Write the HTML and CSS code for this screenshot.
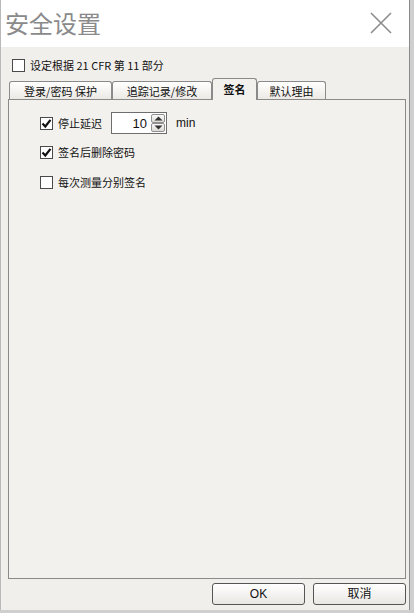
FILE: index.html
```html
<!DOCTYPE html>
<html lang="zh">
<head>
<meta charset="utf-8">
<title>安全设置</title>
<link rel="stylesheet" href="styles.css">
</head>
<body>
<div class="screen">
  <div class="dialog">
    <div class="titlebar">
      <span class="title">安全设置</span>
      <span class="close">
        <svg width="22" height="22" viewBox="0 0 22 22"><path d="M1 1 L21 21 M21 1 L1 21" stroke="#8c8c8c" stroke-width="1.6" fill="none"/></svg>
      </span>
    </div>
    <div class="body">
      <label class="check-row cfr">
        <span class="box"></span>
        <span class="txt">设定根据 21 CFR 第 11 部分</span>
      </label>
      <div class="tabs">
        <div class="tab t1">登录/密码 保护</div>
        <div class="tab t2">追踪记录/修改</div>
        <div class="tab active t3">签名</div>
        <div class="tab t4">默认理由</div>
      </div>
      <div class="panel">
        <div class="row r1">
          <label class="check-row">
            <span class="box checked"><svg width="11" height="11" viewBox="0 0 11 11"><path d="M1.5 5.5 L4.3 8.5 L9.5 1.8" stroke="#111" stroke-width="2.2" fill="none"/></svg></span>
            <span class="txt">停止延迟</span>
          </label>
          <div class="spin">
            <span class="spin-val">10</span>
            <span class="spin-btns">
              <span class="sb"><svg width="9" height="5" viewBox="0 0 9 5"><path d="M0.5 4.5 L4.5 0.5 L8.5 4.5 Z" fill="#333"/></svg></span>
              <span class="sb"><svg width="9" height="5" viewBox="0 0 9 5"><path d="M0.5 0.5 L4.5 4.5 L8.5 0.5 Z" fill="#333"/></svg></span>
            </span>
          </div>
          <span class="unit">min</span>
        </div>
        <label class="check-row r2">
          <span class="box checked"><svg width="11" height="11" viewBox="0 0 11 11"><path d="M1.5 5.5 L4.3 8.5 L9.5 1.8" stroke="#111" stroke-width="2.2" fill="none"/></svg></span>
          <span class="txt">签名后删除密码</span>
        </label>
        <label class="check-row r3">
          <span class="box"></span>
          <span class="txt">每次测量分别签名</span>
        </label>
      </div>
      <div class="buttons">
        <button class="btn">OK</button>
        <button class="btn">取消</button>
      </div>
    </div>
  </div>
</div>
</body>
</html>
```

FILE: styles.css
```css
html, body {
  margin: 0;
  padding: 0;
}
body {
  width: 414px;
  height: 613px;
  overflow: hidden;
  background: #cfcfcf;
  font-family: "Noto Sans CJK SC", "Liberation Sans", sans-serif;
  font-size: 11px;
  color: #111;
}
.screen {
  display: flex;
  width: 414px;
  height: 613px;
}
.dialog {
  width: 408px;
  height: 610px;
  border-left: 1px solid #b9b9b9;
  border-right: 1px solid #8a8a8a;
  display: flex;
  flex-direction: column;
  background: #f1efec;
}
.titlebar {
  height: 47px;
  flex: none;
  background: #fff;
  display: flex;
  align-items: center;
  justify-content: space-between;
  padding: 0 17px 0 4px;
}
.title {
  font-size: 24px;
  color: #8a8a8a;
  line-height: 1;
  margin-top: -1px;
}
.close {
  display: flex;
  margin-top: -1px;
}
.body {
  flex: 1;
  display: flex;
  flex-direction: column;
  padding: 10px 0 0 7px;
}
.check-row {
  display: flex;
  align-items: center;
  height: 16px;
  line-height: 16px;
}
.box {
  width: 11px;
  height: 11px;
  border: 1px solid #4a4a4a;
  background: #fff;
  display: flex;
  align-items: center;
  justify-content: center;
  flex: none;
}
.txt {
  margin-left: 5px;
  white-space: nowrap;
}
.cfr {
  padding-left: 4px;
}
.tabs {
  display: flex;
  align-items: flex-end;
  height: 22px;
  margin-top: 5px;
  padding-left: 1px;
  margin-bottom: -1px;
}
.tab {
  height: 19px;
  box-sizing: border-box;
  border: 1px solid #8a8a8a;
  border-bottom: none;
  border-radius: 3px 3px 0 0;
  background: linear-gradient(#ffffff, #ebe8e3);
  display: flex;
  align-items: center;
  justify-content: center;
  white-space: nowrap;
  line-height: 1;
}
.t1 { width: 103px; }
.t2 { width: 100px; }
.t3 { width: 45px; }
.t4 { width: 69px; }
.tab.active {
  height: 22px;
  background: #f3f1ee;
  font-weight: bold;
  position: relative;
  z-index: 1;
}
.panel {
  width: 398px;
  height: 480px;
  box-sizing: border-box;
  border: 1px solid #8a8a8a;
  background: #f3f1ee;
  padding: 12px 0 0 31px;
  display: flex;
  flex-direction: column;
  align-items: flex-start;
}
.row {
  display: flex;
  align-items: center;
  height: 22px;
}
.spin {
  margin-left: 9px;
  width: 56px;
  height: 22px;
  box-sizing: border-box;
  border: 1px solid #6e6e6e;
  background: #fff;
  display: flex;
  align-items: center;
  justify-content: flex-end;
  padding-right: 1px;
}
.spin-val {
  font-family: "Liberation Sans", "Noto Sans", sans-serif;
  font-size: 13px;
  margin-right: 4px;
}
.spin-btns {
  display: flex;
  flex-direction: column;
  width: 14px;
  height: 18px;
}
.sb {
  flex: 1;
  box-sizing: border-box;
  border: 1px solid #8f8f8f;
  border-radius: 2px;
  background: linear-gradient(#fafafa, #dcdad5);
  display: flex;
  align-items: center;
  justify-content: center;
}
.unit {
  margin-left: 9px;
  font-family: "Liberation Sans", "Noto Sans", sans-serif;
  font-size: 12px;
}
.r2 {
  margin-top: 10px;
}
.r3 {
  margin-top: 14px;
}
.buttons {
  display: flex;
  justify-content: flex-end;
  gap: 8px;
  margin-top: 4px;
  width: 398px;
}
.btn {
  width: 93px;
  height: 22px;
  box-sizing: border-box;
  border: 1px solid #555;
  border-radius: 3px;
  background: linear-gradient(#ffffff, #e9e7e3);
  font-family: "Liberation Sans", "Noto Sans CJK SC", sans-serif;
  font-size: 12px;
  color: #111;
  padding: 0;
  line-height: 1;
}
```
